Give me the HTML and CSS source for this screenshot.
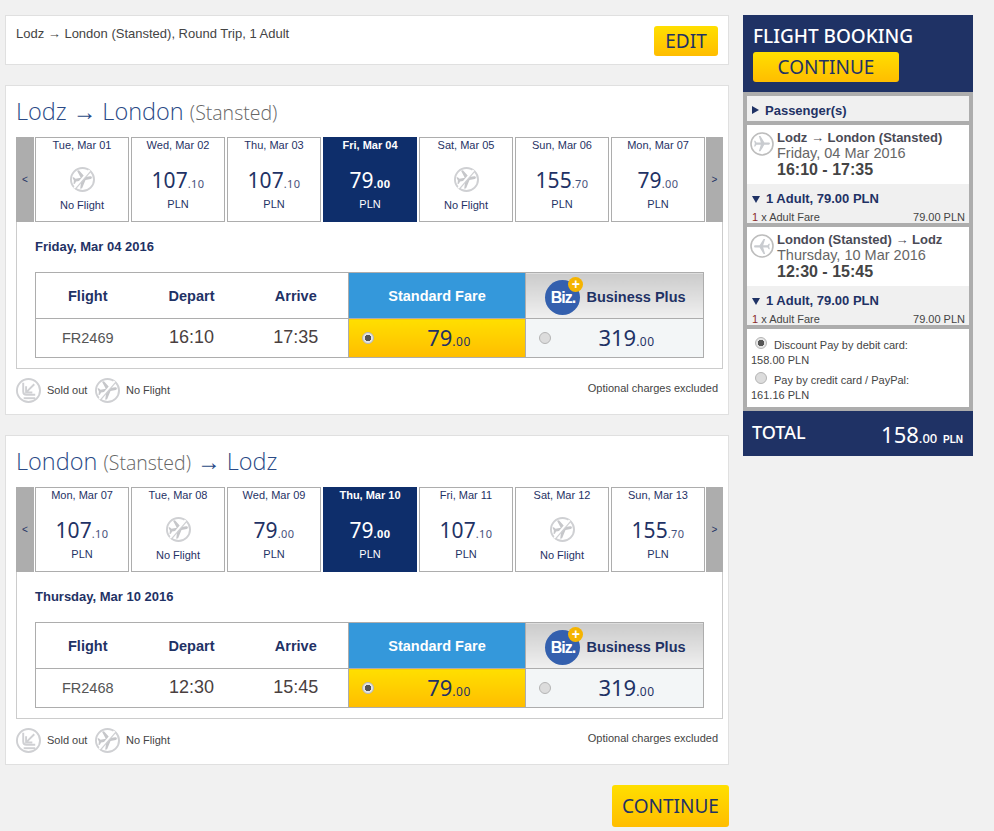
FILE: index.html
```html
<!DOCTYPE html>
<html lang="en">
<head>
  <meta charset="UTF-8">
  <title>Flight Booking</title>
  <link rel="stylesheet" href="styles.css">
</head>
<body>

  <svg class="defs" width="0" height="0">
    <symbol id="plane" viewBox="0 0 24 24">
      <path d="M21 16v-2l-8-5V3.500c0-.83-.67-1.500-1.500-1.500S10 2.670 10 3.500V9l-8 5v2l8-2.500V19l-2 1.500V22l3.500-1 3.500 1v-1.500L13 19v-5.500l8 2.500z"/>
    </symbol>
    <symbol id="no-flight" viewBox="0 0 26 26">
      <circle cx="13" cy="13" r="12" fill="none" stroke="#cfd0d3" stroke-width="2"/>
      <use href="#plane" x="1" y="1" width="24" height="24" transform="rotate(80 13 13)" fill="#c6c7ca"/>
      <path d="M20.500 3.500 4.500 22" stroke="#fff" stroke-width="2.400"/>
      <path d="M21.500 4.500 5.500 23" stroke="#cfd0d3" stroke-width="1.300"/>
    </symbol>
    <symbol id="sold-out" viewBox="0 0 26 26">
      <circle cx="13" cy="13" r="12" fill="none" stroke="#cfd0d3" stroke-width="2"/>
      <path d="M7.500 5v9q0 3.500 3.500 3.500h9" fill="none" stroke="#cfd0d3" stroke-width="2"/>
      <path d="M19 6.500 11 14.500M10.500 8.500v6.500h6.500" fill="none" stroke="#cfd0d3" stroke-width="2"/>
      <path d="M8 21h12" stroke="#cfd0d3" stroke-width="2"/>
    </symbol>
  </svg>

  <div class="page">
    <main class="main">

      <section class="card summary">
        <p>Lodz → London (Stansted), Round Trip, 1 Adult</p>
        <a href="#" class="btn btn-edit">EDIT</a>
      </section>

      <section class="card flight">
        <h2>Lodz → London <small>(Stansted)</small></h2>
        <div class="strip">
          <a href="#" class="arrow arrow-l">&lt;</a>
          <a href="#" class="day"><span class="day-name">Tue, Mar 01</span><svg class="ico-none"><use href="#no-flight"/></svg><span class="day-no">No Flight</span></a>
          <a href="#" class="day"><span class="day-name">Wed, Mar 02</span><span class="day-price">107<small>.10</small></span><span class="day-cur">PLN</span></a>
          <a href="#" class="day"><span class="day-name">Thu, Mar 03</span><span class="day-price">107<small>.10</small></span><span class="day-cur">PLN</span></a>
          <a href="#" class="day active"><span class="day-name">Fri, Mar 04</span><span class="day-price">79<small>.00</small></span><span class="day-cur">PLN</span></a>
          <a href="#" class="day"><span class="day-name">Sat, Mar 05</span><svg class="ico-none"><use href="#no-flight"/></svg><span class="day-no">No Flight</span></a>
          <a href="#" class="day"><span class="day-name">Sun, Mar 06</span><span class="day-price">155<small>.70</small></span><span class="day-cur">PLN</span></a>
          <a href="#" class="day"><span class="day-name">Mon, Mar 07</span><span class="day-price">79<small>.00</small></span><span class="day-cur">PLN</span></a>
          <a href="#" class="arrow arrow-r">&gt;</a>
        </div>
        <div class="panel">
          <h3>Friday, Mar 04 2016</h3>
          <table class="fares">
            <tr>
              <th>Flight</th>
              <th>Depart</th>
              <th class="head-arrive">Arrive</th>
              <th class="head-std">Standard Fare</th>
              <th class="head-biz">
                <span class="biz-wrap">
                  <span class="biz-logo">Biz.<i>+</i></span>
                  Business Plus
                </span>
              </th>
            </tr>
            <tr>
              <td class="no">FR2469</td>
              <td class="time">16:10</td>
              <td class="time">17:35</td>
              <td class="price price-std"><span class="radio on"></span>79<small>.00</small></td>
              <td class="price price-biz"><span class="radio"></span>319<small>.00</small></td>
            </tr>
          </table>
        </div>
        <div class="legend">
          <svg class="ico-legend"><use href="#sold-out"/></svg><span class="legend-sold">Sold out</span>
          <svg class="ico-legend"><use href="#no-flight"/></svg><span>No Flight</span>
          <span class="legend-note">Optional charges excluded</span>
        </div>
      </section>

      <section class="card flight">
        <h2>London <small>(Stansted)</small> → Lodz</h2>
        <div class="strip">
          <a href="#" class="arrow arrow-l">&lt;</a>
          <a href="#" class="day"><span class="day-name">Mon, Mar 07</span><span class="day-price">107<small>.10</small></span><span class="day-cur">PLN</span></a>
          <a href="#" class="day"><span class="day-name">Tue, Mar 08</span><svg class="ico-none"><use href="#no-flight"/></svg><span class="day-no">No Flight</span></a>
          <a href="#" class="day"><span class="day-name">Wed, Mar 09</span><span class="day-price">79<small>.00</small></span><span class="day-cur">PLN</span></a>
          <a href="#" class="day active"><span class="day-name">Thu, Mar 10</span><span class="day-price">79<small>.00</small></span><span class="day-cur">PLN</span></a>
          <a href="#" class="day"><span class="day-name">Fri, Mar 11</span><span class="day-price">107<small>.10</small></span><span class="day-cur">PLN</span></a>
          <a href="#" class="day"><span class="day-name">Sat, Mar 12</span><svg class="ico-none"><use href="#no-flight"/></svg><span class="day-no">No Flight</span></a>
          <a href="#" class="day"><span class="day-name">Sun, Mar 13</span><span class="day-price">155<small>.70</small></span><span class="day-cur">PLN</span></a>
          <a href="#" class="arrow arrow-r">&gt;</a>
        </div>
        <div class="panel">
          <h3>Thursday, Mar 10 2016</h3>
          <table class="fares">
            <tr>
              <th>Flight</th>
              <th>Depart</th>
              <th class="head-arrive">Arrive</th>
              <th class="head-std">Standard Fare</th>
              <th class="head-biz">
                <span class="biz-wrap">
                  <span class="biz-logo">Biz.<i>+</i></span>
                  Business Plus
                </span>
              </th>
            </tr>
            <tr>
              <td class="no">FR2468</td>
              <td class="time">12:30</td>
              <td class="time">15:45</td>
              <td class="price price-std"><span class="radio on"></span>79<small>.00</small></td>
              <td class="price price-biz"><span class="radio"></span>319<small>.00</small></td>
            </tr>
          </table>
        </div>
        <div class="legend">
          <svg class="ico-legend"><use href="#sold-out"/></svg><span class="legend-sold">Sold out</span>
          <svg class="ico-legend"><use href="#no-flight"/></svg><span>No Flight</span>
          <span class="legend-note">Optional charges excluded</span>
        </div>
      </section>

      <div class="actions">
        <a href="#" class="btn btn-next">CONTINUE</a>
      </div>
    </main>

    <aside class="side">
      <div class="side-head">
        <h2>FLIGHT BOOKING</h2>
        <a href="#" class="btn btn-side">CONTINUE</a>
      </div>
      <div class="side-body">
        <div class="side-pass"><span class="tri-r"></span>Passenger(s)</div>

        <div class="leg">
          <div class="leg-top">
            <svg class="ico-leg" viewBox="0 0 24 24"><circle cx="12" cy="12" r="11" fill="none" stroke="#bdbdbd" stroke-width="1.600"/><use href="#plane" x="2.500" y="2.500" width="19" height="19" transform="rotate(90 12 12)" fill="#c9ccd0"/></svg>
            <div>
              <div class="leg-route">Lodz → London (Stansted)</div>
              <div class="leg-date">Friday, 04 Mar 2016</div>
              <div class="leg-time">16:10 - 17:35</div>
            </div>
          </div>
          <div class="leg-fare">
            <div class="leg-sum"><span class="tri-d"></span>1 Adult, 79.00 PLN</div>
            <div class="leg-line"><span><b>1</b> x Adult Fare</span><span>79.00 PLN</span></div>
          </div>
        </div>

        <div class="leg">
          <div class="leg-top">
            <svg class="ico-leg" viewBox="0 0 24 24"><circle cx="12" cy="12" r="11" fill="none" stroke="#bdbdbd" stroke-width="1.600"/><use href="#plane" x="2.500" y="2.500" width="19" height="19" transform="rotate(-90 12 12)" fill="#c9ccd0"/></svg>
            <div>
              <div class="leg-route">London (Stansted) → Lodz</div>
              <div class="leg-date">Thursday, 10 Mar 2016</div>
              <div class="leg-time">12:30 - 15:45</div>
            </div>
          </div>
          <div class="leg-fare">
            <div class="leg-sum"><span class="tri-d"></span>1 Adult, 79.00 PLN</div>
            <div class="leg-line"><span><b>1</b> x Adult Fare</span><span>79.00 PLN</span></div>
          </div>
        </div>

        <div class="pay">
          <div class="pay-opt"><span class="radio on"></span>Discount Pay by debit card:</div>
          <div class="pay-sum">158.00 PLN</div>
          <div class="pay-opt"><span class="radio"></span>Pay by credit card / PayPal:</div>
          <div class="pay-sum">161.16 PLN</div>
        </div>
      </div>
      <div class="side-total">
        <span class="total-label">TOTAL</span>
        <span class="total-val">158<small>.00</small> <em>PLN</em></span>
      </div>
    </aside>
  </div>

</body>
</html>
```

FILE: styles.css
```css
:root {
  --navy: #1f3265;
  --navy-dark: #0e2e6b;
  --line: #adadad;
  --text: #444;
}
* { box-sizing: border-box; margin: 0; padding: 0; }
body {
  background: #f1f1f1;
  color: var(--text);
  font-family: "Liberation Sans", Arial, sans-serif;
  font-size: 12px;
}
a { color: inherit; text-decoration: none; }
.defs { position: absolute; }

.page {
  display: flex;
  align-items: flex-start;
  gap: 14px;
  padding: 15px 0 4px 5px;
}
.main { width: 724px; }

.card {
  background: #fff;
  border: 1px solid #e0e0e0;
  margin-bottom: 20px;
}
.btn {
  display: flex;
  align-items: center;
  justify-content: center;
  background: linear-gradient(#ffdf00, #ffbd00);
  border-radius: 3px;
  color: var(--navy);
  font-family: "Noto Sans", sans-serif;
  font-size: 19px;
}

.summary {
  display: flex;
  justify-content: space-between;
  height: 50px;
  padding: 10px 10px 0 10px;
}
.summary p { font-size: 13px; line-height: 15px; }
.btn-edit { width: 64px; height: 30px; }

.flight { height: 330px; padding: 0 5px 0 10px; }
.flight > h2 {
  height: 51px;
  padding-top: 9px;
  color: #2a4a86;
  font-family: "Open Sans", sans-serif;
  font-size: 23.5px;
  font-weight: 300;
  line-height: 33px;
}
.flight > h2 small {
  color: #666;
  font-size: 19.5px;
}

.strip { display: flex; gap: 2px; height: 85px; }
.arrow {
  display: flex;
  align-items: center;
  justify-content: center;
  background: var(--line);
  color: var(--navy);
  font-size: 10px;
}
.arrow-l { width: 18px; margin-right: -1px; }
.arrow-r { width: 17px; margin-left: -1px; }
.day {
  display: flex;
  flex-direction: column;
  align-items: center;
  width: 94px;
  border: 1px solid var(--line);
  color: var(--navy);
}
.day-name { height: 26px; padding-top: 1px; font-size: 11px; line-height: 13px; }
.day-price {
  height: 34px;
  padding-top: 1px;
  font-family: "Noto Sans", sans-serif;
  font-size: 21px;
  line-height: 30px;
}
.day-price small { font-size: 11px; letter-spacing: .4px; opacity: .85; }
.day-cur { font-size: 11px; line-height: 13px; }
.day-no { margin-top: 7px; font-size: 11px; line-height: 13px; }
.ico-none { width: 25px; height: 25px; margin-top: 3px; }
.day.active {
  background: var(--navy-dark);
  border-color: var(--navy-dark);
  color: #fff;
}
.day.active .day-name { font-weight: bold; }
.day.active small { opacity: 1; font-weight: bold; }

.panel {
  height: 147px;
  padding: 0 18px;
  border: 1px solid #ccc;
  border-top: 0;
}
.panel h3 {
  height: 50px;
  padding-top: 18px;
  color: var(--navy);
  font-size: 13px;
  line-height: 14px;
}
.fares {
  width: 669px;
  table-layout: fixed;
  border-collapse: collapse;
  border: 1px solid var(--line);
}
.fares th, .fares td { border-top: 1px solid var(--line); text-align: center; }
.fares th {
  width: 104px;
  height: 46px;
  color: var(--navy);
  font-size: 14.5px;
}
.fares td { height: 39px; }
.fares .head-arrive { width: 105px; }
.fares .head-std {
  width: 177px;
  background: #3498db;
  border-left: 1px solid var(--line);
  color: #fff;
}
.fares .head-biz {
  width: 178px;
  background: linear-gradient(#cbcbcb, #f0f0f0);
  border-left: 1px solid var(--line);
}
.biz-wrap { display: flex; align-items: center; justify-content: center; gap: 6px; padding: 3px 0 0 2px; }
.biz-logo {
  position: relative;
  width: 35px;
  height: 35px;
  background: #3460ae;
  border-radius: 50%;
  color: #fff;
  font-size: 16px;
  font-weight: bold;
  letter-spacing: -1px;
  line-height: 35px;
}
.biz-logo i {
  position: absolute;
  top: -3px;
  right: -3px;
  width: 15px;
  height: 15px;
  background: #f5b400;
  border-radius: 50%;
  font-size: 14px;
  font-style: normal;
  letter-spacing: 0;
  line-height: 14px;
}
.no { font-size: 14.5px; color: #555; }
.time { font-size: 18px; color: #4a3f3f; padding-bottom: 2px; }
.price {
  position: relative;
  border-left: 1px solid var(--line);
  color: var(--navy);
  font-family: "Noto Sans", sans-serif;
  font-size: 22px;
  padding-bottom: 2px;
}
.price small { font-size: 12px; letter-spacing: .5px; }
.price-std { background: linear-gradient(#ffdf00, #ffbd00); padding-left: 24px; }
.price-biz { background: #f3f6f7; padding-left: 24px; }
.price .radio { position: absolute; left: 13px; top: 13px; }

.radio {
  display: inline-block;
  width: 12px;
  height: 12px;
  background: #dcdcdc;
  border: 1px solid #b5b5b5;
  border-radius: 50%;
}
.radio.on { background: radial-gradient(#555 0 3px, #e4e4e4 3.5px); }

.legend {
  display: flex;
  align-items: center;
  height: 42px;
  font-size: 11px;
}
.ico-legend { width: 25px; height: 25px; margin-right: 6px; flex-shrink: 0; }
.legend-sold { width: 48px; }
.legend-note { margin-left: auto; margin-top: -4px; margin-right: 5px; }

.actions { display: flex; justify-content: flex-end; }
.btn-next { width: 117px; height: 42px; }

.side { width: 230px; }
.side-head {
  height: 77px;
  padding: 9px 10px 0;
  background: var(--navy);
}
.side-head h2 {
  color: #fff;
  font-family: "Noto Sans", sans-serif;
  font-size: 19px;
  font-weight: 500;
  line-height: 24px;
  margin-bottom: 4px;
}
.btn-side { width: 146px; height: 30px; }

.side-body {
  display: flex;
  flex-direction: column;
  gap: 4px;
  padding: 4px;
  background: var(--line);
}
.side-pass {
  display: flex;
  align-items: center;
  height: 25px;
  padding: 3px 0 0 5px;
  background: #f0f0f0;
  color: var(--navy);
  font-size: 13px;
  font-weight: bold;
}
.tri-r {
  width: 0;
  height: 0;
  margin-right: 6px;
  border-left: 7px solid var(--navy);
  border-top: 4px solid transparent;
  border-bottom: 4px solid transparent;
}
.tri-d {
  display: inline-block;
  width: 0;
  height: 0;
  margin-right: 6px;
  border-top: 7px solid var(--navy);
  border-left: 4px solid transparent;
  border-right: 4px solid transparent;
}
.leg-top {
  display: flex;
  gap: 3px;
  height: 59px;
  padding: 6px 0 0 3px;
  background: #fff;
}
.ico-leg { width: 24px; height: 24px; margin-top: 1px; flex-shrink: 0; }
.leg-route { font-weight: bold; font-size: 13px; line-height: 14px; color: #4a4a55; }
.leg-date { font-size: 14.5px; line-height: 16px; color: #666; }
.leg-time { font-size: 16px; font-weight: bold; line-height: 18px; color: #444; }
.leg-fare { height: 39px; padding: 7px 4px 0 5px; background: #f0f0f0; }
.leg-sum { color: var(--navy); font-size: 13px; font-weight: bold; line-height: 16px; }
.leg-line { display: flex; justify-content: space-between; margin-top: 4px; font-size: 11px; line-height: 12px; }
.leg-line b { color: #8a2b2b; font-weight: normal; }

.pay { height: 78px; padding: 8px 4px 0; background: #fff; font-size: 11px; line-height: 15px; }
.pay-opt { display: flex; align-items: center; padding-left: 4px; height: 16px; }
.pay-opt .radio { margin: -4px 7px 0 0; }
.pay-sum { height: 19px; }

.side-total {
  display: flex;
  align-items: center;
  justify-content: space-between;
  height: 45px;
  padding: 0 10px 0 9px;
  background: var(--navy);
  color: #fff;
}
.total-label { font-family: "Noto Sans", sans-serif; font-size: 18px; font-weight: 500; margin-top: -3px; }
.total-val { font-family: "Noto Sans", sans-serif; font-size: 22px; }
.total-val small { font-size: 13px; font-weight: 500; }
.total-val em { font-family: "Liberation Sans", sans-serif; font-size: 10px; font-style: normal; font-weight: bold; }
```
